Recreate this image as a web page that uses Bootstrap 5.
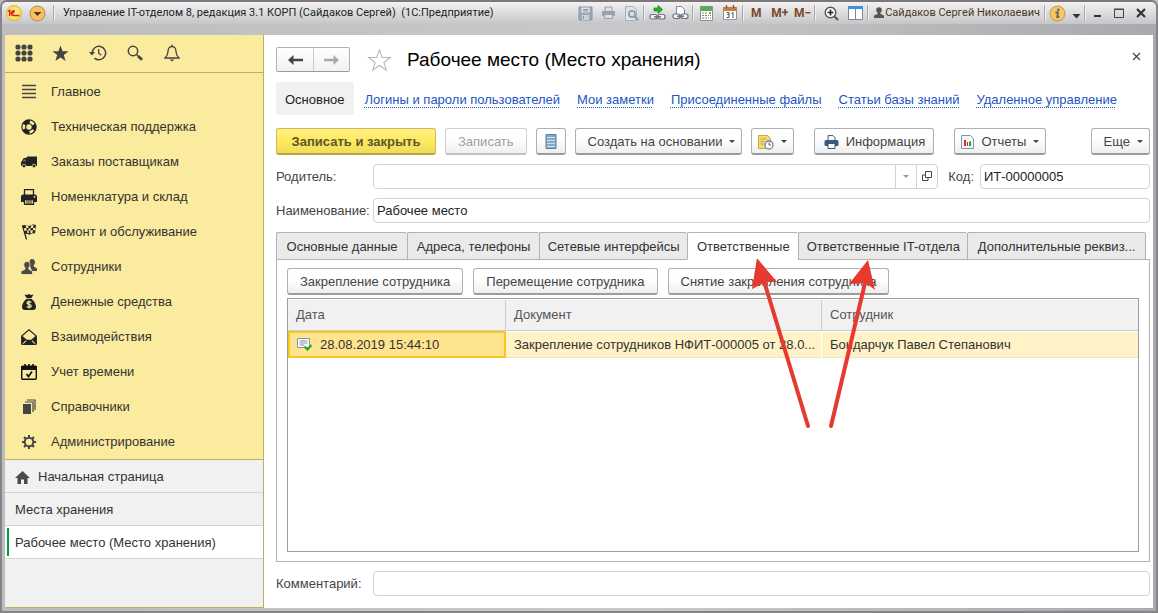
<!DOCTYPE html>
<html lang="ru">
<head>
<meta charset="utf-8">
<meta name="viewport" content="width=device-width, initial-scale=1">
<title>Рабочее место (Место хранения)</title>
<link href="https://cdn.jsdelivr.net/npm/bootstrap@5.3.0/dist/css/bootstrap.min.css" rel="stylesheet">
<style>
body{font:13px/16px "Liberation Sans",Arial,sans-serif;color:#333;background:#b9b9bb}
svg{display:block;flex:none}
button{font:inherit;color:inherit}
.win{min-height:100vh;border:2px solid #858587;border-top-color:#7d7779;border-radius:7px 7px 0 0;padding:0 3px 3px;background:linear-gradient(90deg,#bdbdbf,#c9c9cb 55%,#a9aaad)}
.titlebar{height:22px;margin:0 -3px;padding:0 4px 0 4px;font:11px/22px Roboto,"Open Sans",sans-serif;color:#222;background:linear-gradient(#f2f2f3,#d8d8da 60%,#c6c6c8);border-radius:5px 5px 0 0}
.titlebar button{border:0;padding:0;background:none;width:23px;height:22px;display:flex;align-items:center;justify-content:center;flex:none}
.titlebar .sys{width:22px}
.titlebar .wide{width:24px}
.titlebar .slim{width:16px}
.tsep{width:2px;height:16px;flex:none;border-left:1px solid #aaaaad;border-right:1px solid #eee}
.memo{font-weight:700;color:#7b4a28;font-size:12px}
.user-name{color:#4b3a18}
.under{height:11px}
.side{width:259px;flex:none;background:#f1f1f1;border-right:1px solid #bfae5c;border-bottom:1px solid #bfae5c}
.yellow{background:#fbeb9e;border-bottom:1px solid #bfae5c;padding-bottom:1px}
.quick{height:38px;border-bottom:1px solid #bfae5c;padding-left:8px}
.quick button{width:37px;height:36px;border:0;background:none;padding:0;display:flex;align-items:center;justify-content:center;color:#444}
.quick button:first-child{width:22px;margin-right:7px}
.menu-link{height:35px;padding:2px 0 0 16px;color:#333;text-decoration:none;gap:14px}
.open-link{height:33px;border-bottom:1px solid #d4d4d4;color:#333;text-decoration:none;padding:2px 0 0 10px}
.open-link.now{background:#fff;position:relative}
.open-link.now::before{content:"";position:absolute;left:2px;top:2px;bottom:2px;width:2px;background:#0a9648}
.form-area{background:#fff;padding:12px 3px 12px 12px;min-width:0}
.hist{height:25px;border:1px solid #b0b0b0;border-bottom-color:#999;border-radius:2px;background:linear-gradient(#fff,#f1f1f1)}
.hist button{width:36px;border:0;background:none;display:flex;align-items:center;justify-content:center}
.hist button+button{border-left:1px solid #ccc}
.ttl{font-size:19px;line-height:24px;color:#000;margin:1px 0 0 15px;font-weight:400}
.close-form{border:0;background:none;padding:0 9px 6px 0}
.pages{height:33px;gap:17px;margin-top:10px;white-space:nowrap}
.pages a{color:#2255c4;padding-top:2px;text-decoration:underline dotted;text-decoration-thickness:1px;text-underline-offset:3px}
.pages a.cur{background:#f1f1f1;border-radius:4px;line-height:31px;padding:2px 9px 0;margin-right:-6px;color:#222;text-decoration:none}
.bar{margin-top:13px;gap:9px}
.b{height:27px;border:1px solid #b0b0b0;border-bottom:2px solid #9c9c9c;border-radius:3px;background:linear-gradient(#fff 40%,#efefef);color:#444;padding:1px 12px 0;display:flex;align-items:center;justify-content:center;white-space:nowrap;gap:7px;font-size:13px;line-height:16px}
.b.main{width:160px;background:linear-gradient(#fff08a,#ffe95c 50%,#efdb5e);border-color:#d3bc48;border-bottom-color:#b9a43f;font-weight:700;color:#5c5630}
.b:disabled{color:#a0a0a0;border-color:#d0d0d0;border-bottom-color:#c2c2c2}
.b.tight{padding:1px 6px 0}
.b .dropd{margin-right:-6px}
.b.tight .dropd{margin-right:0}
.w-info{width:120px}
.w-rep{width:92px}
.apart{margin-left:11px}
.cmds{gap:10px}
.dropd{width:0;height:0;border:3px solid transparent;border-top-color:#444;border-bottom:0;flex:none}
.pale{opacity:.55}
.field{height:25px;border:1px solid #d2d2d2;border-radius:4px;padding:0 3px;color:#222;min-width:0;background:#fff;font-size:13px}
.code-field{width:170px}
.frow{margin-top:9px}
.lab{width:97px;flex:none;color:#444;white-space:nowrap}
.lab-code{margin:0 6px 0 10px;color:#444}
.combo{border:1px solid #d2d2d2;border-radius:4px;height:25px}
.combo .field{border:0;height:23px}
.combo button{width:21px;border:0;border-left:1px solid #d2d2d2;background:none;padding:0;display:flex;align-items:center;justify-content:center}
.tabrow{margin-top:9px;padding-right:4px}
.tabrow button{height:28px;border:1px solid #b2b2b2;border-right:0;background:#eaeaea;border-radius:2px 2px 0 0;padding:0;white-space:nowrap;line-height:25px;margin-bottom:-1px;flex:1 1 0}
.tabrow button:last-child{border-right:1px solid #b2b2b2}
.tabrow button.active{background:#fff;border-bottom-color:#fff;position:relative;z-index:1}
.pane{border:1px solid #b2b2b2;padding:8px 10px 9px;position:relative}
.gridbox{border:1px solid #9e9e9e;margin-top:3px;padding:1px 0 0}
.grid-t{width:100%;table-layout:fixed;border-collapse:separate;border-spacing:0}
.grid-t th{height:31px;background:#f1f1f1;font-weight:400;color:#555;border-bottom:1px solid #ccc;padding:0 8px 1px;border-right:1px solid #ccc}
.grid-t td{height:27px;padding:0 0 0 8px;background:#fff2c6;border-top:1px solid #fff;border-right:1px solid #fff;white-space:nowrap;box-shadow:inset 0 -1px #e8e4d6}
.grid-t td.sel{background:#ffe48f;border:2px solid #f8c721;padding:0 6px;box-shadow:none}
.grid-t th:last-child,.grid-t td:last-child{border-right:0}
.marks{position:absolute;left:469px;top:-1px;pointer-events:none;z-index:2}
</style>
</head>
<body>
<div class="win d-flex flex-column">
<header class="titlebar d-flex align-items-center">
 <svg width="16" height="16" viewBox="0 0 16 16"><defs><radialGradient id="gy"><stop offset="0" stop-color="#fff9b0"/><stop offset="1" stop-color="#f8dc3a"/></radialGradient></defs><circle cx="8" cy="8" r="7.500" fill="url(#gy)" stroke="#d9b94a"/><path d="M2 6.500l1.700-1.200v5.700M8.800 6a2.400 2.400 0 1 0-1.500 4.500h6.200M8.500 7.600a.9.900 0 1 0-.8 1.100" fill="none" stroke="#d8261c" stroke-width="1.400"/></svg>
 <button class="ms-1" aria-label="Меню"><svg width="17" height="17" viewBox="0 0 17 17"><circle cx="8.500" cy="8.500" r="7.500" fill="#f9bf62" stroke="#b88940"/><path d="M4.500 7h8l-4 4z" fill="#4d3a20"/></svg></button>
 <span class="tsep ms-1 me-2"></span>
 <span class="text-nowrap">Управление IT-отделом 8, редакция 3.1 КОРП (Сайдаков Сергей) &nbsp;(1С:Предприятие)</span>
 <div class="ms-auto d-flex align-items-center">
 <button aria-label="Сохранить"><svg width="15" height="15" viewBox="0 0 15 15"><path d="M1 1h13v13H1z" fill="#9fabb8" stroke="#8593a3"/><path d="M3.500 1.500h8v5h-8z" fill="#dde2e7"/><path d="M4 9h7v5H4z" fill="#c9d0d7"/><path d="M5 3.500h5M5 5h5M5.500 10v3" stroke="#8593a3"/></svg></button>
 <button aria-label="Печать"><svg width="15" height="14" viewBox="0 0 15 14"><path d="M4 5V1h7v4" fill="#dde0e3" stroke="#98a2ac"/><rect x="1" y="5" width="13" height="5" rx="1" fill="#98a2ac"/><path d="M3.500 8.500h8v4h-8z" fill="#dde0e3" stroke="#98a2ac"/></svg></button>
 <button aria-label="Просмотр"><svg width="15" height="15" viewBox="0 0 15 15"><path d="M1.500.5h8l3 3v11h-11z" fill="#e2e5e8" stroke="#a8b0b8"/><circle cx="8" cy="8" r="3.200" fill="#d1dce5" stroke="#8796a5" stroke-width="1.500"/><path d="M10.500 10.500l3.500 3.500" stroke="#8796a5" stroke-width="2"/></svg></button>
 <span class="tsep"></span>
 <button class="wide" aria-label="Получить ссылку"><svg width="17" height="16" viewBox="0 0 17 16"><g fill="#f5f5f5" stroke="#67717c" stroke-width="1.200"><rect x="1" y="9.500" width="7" height="4.500" rx="2"/><rect x="9" y="9.500" width="7" height="4.500" rx="2"/></g><path d="M5 11.800h7" stroke="#67717c" stroke-width="1.500"/><path d="M5 3h4V.5l4.500 4L9 8.500V6H5z" fill="#25b225" stroke="#13801c" stroke-width=".7"/></svg></button>
 <button aria-label="Перейти по ссылке"><svg width="17" height="16" viewBox="0 0 17 16"><path d="M4.500 9V1.500h5l3 3V9" fill="#fff" stroke="#7b8793"/><g fill="#f5f5f5" stroke="#67717c" stroke-width="1.200"><rect x="1" y="9" width="7" height="4.500" rx="2"/><rect x="9" y="9" width="7" height="4.500" rx="2"/></g><path d="M5 11.200h7" stroke="#67717c" stroke-width="1.500"/></svg></button>
 <span class="tsep"></span>
 <button class="wide" aria-label="Калькулятор"><svg width="13" height="15" viewBox="0 0 13 15"><path d="M.5.500h12v14H.5z" fill="#fff" stroke="#829682"/><path d="M1 1h11v4H1z" fill="#4fb04f"/><path d="M2 7h2M5 7h2M2 9.500h2M5 9.500h2M2 12h2M5 12h2M8 9.500h1M8 12h1M10 9.500h1M10 12h1" stroke="#6c8a6c" stroke-width="1.200"/><path d="M9 7h2" stroke="#d33" stroke-width="1.400"/></svg></button>
 <button class="wide" aria-label="Календарь"><svg width="14" height="16" viewBox="0 0 14 16"><path d="M.5 2.500h13v12H.5z" fill="#fff" stroke="#8d99a5"/><path d="M0 2h14v4H0z" fill="#c97c42"/><path d="M3.500 0v3M10.500 0v3" stroke="#8a5630" stroke-width="1.400"/><path d="M3.500 7.500h2.500v2H4.500h1.500v3H3.500M8.500 8.500l1.500-1v5.500" fill="none" stroke="#44505c"/></svg></button>
 <span class="tsep"></span>
 <button class="memo wide">M</button><button class="memo">M+</button><button class="memo">M−</button>
 <span class="tsep me-1"></span>
 <button aria-label="Масштаб"><svg width="15" height="15" viewBox="0 0 15 15"><circle cx="6.500" cy="6.500" r="5.300" fill="#fff" stroke="#555" stroke-width="1.400"/><path d="M3.500 6.500h6M6.500 3.500v6" stroke="#222" stroke-width="1.600"/><path d="M10.500 10.500l3.500 3.500" stroke="#555" stroke-width="2"/></svg></button>
 <button class="wide" aria-label="Панели"><svg width="15" height="14" viewBox="0 0 15 14"><path d="M.5.500h14v13H.5z" fill="#fff" stroke="#7c8794"/><path d="M0 0h15v3H0z" fill="#3d8fe0"/><path d="M7.500 3v11" stroke="#7c8794"/></svg></button>
 <span class="tsep"></span>
 <svg class="ms-1" width="12" height="12" viewBox="0 0 12 12" fill="#555"><circle cx="6" cy="3" r="2.800"/><path d="M4.500 5h3v2l3.500 1.500V11H1V8.500L4.500 7z"/></svg>
 <span class="user-name text-nowrap me-1">Сайдаков Сергей Николаевич</span>
 <span class="tsep"></span>
 <button class="sys" aria-label="О программе"><svg width="17" height="17" viewBox="0 0 17 17"><circle cx="8.500" cy="8.500" r="7.500" fill="#f7c666" stroke="#c79440"/><circle cx="9.300" cy="4.700" r="1.300" fill="#666"/><path d="M6.500 7.500h2.500l-.8 4.500h2" fill="none" stroke="#666" stroke-width="1.800"/></svg></button>
 <button class="slim" aria-label="Ещё"><svg width="9" height="11" viewBox="0 0 9 11"><path d="M.5 6h8L4.500 10.500z" fill="#333"/></svg></button>
 <span class="tsep"></span>
 <button class="sys" aria-label="Свернуть"><svg width="9" height="10"><path d="M1 8h7" stroke="#333" stroke-width="2"/></svg></button>
 <button class="sys" aria-label="Развернуть"><svg width="12" height="11"><path d="M1.500 1.500h9v8h-9z" fill="none" stroke="#444"/><path d="M1 1h10" stroke="#444"/></svg></button>
 <button class="sys" aria-label="Закрыть"><svg width="10" height="10"><path d="M1 1l8 8M9 1L1 9" stroke="#333" stroke-width="2.200"/></svg></button>
 </div>
</header>
<div class="under"></div>
<div class="d-flex flex-grow-1">
 <aside class="side">
 <div class="yellow">
 <div class="quick d-flex">
 <button aria-label="Разделы"><svg width="18" height="18" viewBox="0 0 18 18"><path d="M3 3h0M9 3h0M15 3h0M3 9h0M9 9h0M15 9h0M3 15h0M9 15h0M15 15h0" stroke="#444" stroke-width="5.200" stroke-linecap="round"/></svg></button>
 <button aria-label="Избранное"><svg width="17" height="17" viewBox="0 0 17 17"><path d="M8.500.5l2.100 5.800h6l-4.800 3.800 1.800 6-5.100-3.600-5.100 3.600 1.800-6L.4 6.300h6z" fill="#444"/></svg></button>
 <button aria-label="История"><svg width="18" height="16" viewBox="0 0 18 16"><path d="M3.200 8a6.700 6.700 0 1 1 2.300 5.100" fill="none" stroke="#444" stroke-width="1.500"/><path d="M0 7h6L3 10.500z" fill="#444"/><path d="M9.700 4v4.200l2.600 2" fill="none" stroke="#444" stroke-width="1.300"/></svg></button>
 <button aria-label="Поиск"><svg width="16" height="16" viewBox="0 0 16 16"><circle cx="6" cy="6" r="4.700" fill="none" stroke="#444" stroke-width="1.500"/><path d="M9.500 9.500l1.500 1.500" stroke="#444" stroke-width="1.500"/><path d="M11 11l4 3.700" stroke="#444" stroke-width="2.800"/></svg></button>
 <button aria-label="Уведомления"><svg width="16" height="18" viewBox="0 0 16 18"><path d="M8 2.500c-3 0-4 2.500-4 5 0 3-1 4.500-3 6.500h14c-2-2-3-3.500-3-6.500 0-2.500-1-5-4-5zM8 .5v2" fill="none" stroke="#444" stroke-width="1.300"/><path d="M5.500 15.500h5L8 17.500z" fill="#444"/></svg></button>
 </div>
 <nav>
 <a href="#" class="menu-link d-flex align-items-center"><svg width="16" height="16"><path d="M1 1.500h14M1 5.500h14M1 9.500h14M1 13.500h14" stroke="#444" stroke-width="1.600"/></svg>Главное</a>
 <a href="#" class="menu-link d-flex align-items-center"><svg width="16" height="16" viewBox="0 0 16 16"><circle cx="8" cy="8" r="5.200" fill="none" stroke="#222" stroke-width="5"/><circle cx="8" cy="8" r="5.200" fill="none" stroke="#fbeb9e" stroke-width="2.600" stroke-dasharray="4.500 6.390" stroke-dashoffset="-3"/></svg>Техническая поддержка</a>
 <a href="#" class="menu-link d-flex align-items-center"><svg width="16" height="16" viewBox="0 0 16 16"><path d="M6 2.500h10V12H0V8.500l2.500-4.300L6 3.500z" fill="#222"/><path d="M1.600 7.500L3 5.300H4.800v2.200z" fill="#6b6749"/><circle cx="3" cy="12" r="1.800" fill="#222" stroke="#fbeb9e" stroke-width=".7"/><circle cx="13" cy="12" r="1.800" fill="#222" stroke="#fbeb9e" stroke-width=".7"/></svg>Заказы поставщикам</a>
 <a href="#" class="menu-link d-flex align-items-center"><svg width="16" height="16" viewBox="0 0 16 16"><path d="M3.500 6V.7h9V6" fill="none" stroke="#222" stroke-width="1.300"/><path d="M1.500 5.500h13l1.500 1.500v6H0V7z" fill="#222"/><path d="M3.500 10.500h9v5h-9z" fill="#fbeb9e" stroke="#222" stroke-width="1.300"/><path d="M5 12h6M5 14h6" stroke="#222"/><circle cx="13.500" cy="7.800" r=".9" fill="#fbeb9e"/></svg>Номенклатура и склад</a>
 <a href="#" class="menu-link d-flex align-items-center"><svg width="16" height="16" viewBox="0 0 16 16"><path d="M1.500 1.500L5.500 15.500" stroke="#222" stroke-width="1.300"/><path d="M1.500 1.700C4-.5 7 3 9.500 1.500S13 .5 15 1l-1 8.500c-2-.5-3 0-4.500.8S6 9 4 10z" fill="#222"/><path d="M4.500 1.200l.7 2.500 2.300.5-.5-2.500zM10 1.500l-.3 2.800 2.500-.6.300-2.700zM2.800 4.500l2.400-.8.600 2.600-2.300.7zM7.500 4.300l2.200.1-.4 2.400-2-.3zM12.200 3.700l2.300.2-.3 2.500-2.300-.3zM5.800 6.400l1.500.1.800 2.800-1.600-.4zM9.300 6.800l2.600-.7-.4 2.600-2 .8z" fill="#fbeb9e"/></svg>Ремонт и обслуживание</a>
 <a href="#" class="menu-link d-flex align-items-center"><svg width="16" height="16" viewBox="0 0 16 16" fill="#4a4a4a"><path d="M11 0c2 0 3 1.500 3 3.200 0 1.400-.6 2.300-1.200 2.800v1.500L16 9.500V12h-5L8.500 6V3C8.500 1.200 9.500 0 11 0z"/><path d="M6 2.500c2 0 3 1.500 3 3.300 0 1.500-.6 2.400-1.200 3v1.400l3.700 2V15.500H0v-3.300l4-2V8.800C3.400 8.200 2.800 7.300 2.800 5.800 2.800 4 4 2.500 6 2.500z" stroke="#fbeb9e" stroke-width=".8"/></svg>Сотрудники</a>
 <a href="#" class="menu-link d-flex align-items-center"><svg width="16" height="16" viewBox="0 0 16 16"><path d="M3.500.5L6 1l2-1 2 1 2.500-.5-2.200 3.700h-4.600zM5.500 5h5c2.500 1.500 4.500 5 4.500 8 0 2-1 3-3 3H4c-2 0-3-1-3-3 0-3 2-6.500 4.500-8z" fill="#222"/><path d="M10.300 8.500C9.500 7.300 6 7.200 6 9c0 1.700 4.300 1 4.300 2.900 0 1.800-3.600 1.800-4.500.4M8 6.500v8" fill="none" stroke="#fbeb9e" stroke-width="1.200"/></svg>Денежные средства</a>
 <a href="#" class="menu-link d-flex align-items-center"><svg width="16" height="16" viewBox="0 0 16 16"><path d="M.7 7L8 .8 15.300 7v8.300H.7z" fill="none" stroke="#222" stroke-width="1.100"/><path d="M.5 7L5 11 .5 15.500zM15.500 7L11 11l4.500 4.500zM1.500 16L6 11.500h4l4.500 4.500z" fill="#222"/><path d="M.7 7.300l4.800 4h5l4.800-4" fill="none" stroke="#222" stroke-width="1.200"/></svg>Взаимодействия</a>
 <a href="#" class="menu-link d-flex align-items-center"><svg width="16" height="16" viewBox="0 0 16 16"><rect x=".7" y="2.200" width="14.600" height="13" rx="1" fill="none" stroke="#111" stroke-width="1.400"/><path d="M0 2h16v4H0z" fill="#111"/><path d="M4 0v3.500M8 0v3M12 0v3.500" stroke="#111" stroke-width="1.600"/><path d="M5.500 10l2 2.500 3.500-5" fill="none" stroke="#111" stroke-width="1.700"/></svg>Учет времени</a>
 <a href="#" class="menu-link d-flex align-items-center"><svg width="16" height="16" viewBox="0 0 16 16"><path d="M2 5h8v10H2z" fill="#444"/><path d="M4 3h8v10M6 1h8v10" fill="none" stroke="#444" stroke-width="1.200"/></svg>Справочники</a>
 <a href="#" class="menu-link d-flex align-items-center"><svg width="16" height="16" viewBox="0 0 16 16"><circle cx="8" cy="8" r="4.300" fill="none" stroke="#444" stroke-width="1.900"/><path d="M8 1v2.500M8 12.500V15M1 8h2.500M12.500 8H15M3 3l2 2M11 11l2 2M13 3l-2 2M5 11l-2 2" stroke="#444" stroke-width="2"/></svg>Администрирование</a>
 </nav>
 </div>
 <nav>
 <a href="#" class="open-link d-flex align-items-center gap-2"><svg width="15" height="13" viewBox="0 0 15 13"><path d="M7.500 0L15 7h-2.500v6H9V8.500H6V13H2.500V7H0z" fill="#4a4a4a"/></svg>Начальная страница</a>
 <a href="#" class="open-link d-flex align-items-center">Места хранения</a>
 <a href="#" class="open-link now d-flex align-items-center">Рабочее место (Место хранения)</a>
 </nav>
 </aside>
 <main class="form-area flex-grow-1 d-flex flex-column">
 <div class="d-flex align-items-center">
 <div class="hist d-flex"><button aria-label="Назад"><svg width="15" height="10" viewBox="0 0 15 10"><path d="M0 5l5.500-5v3.700H15v2.600H5.500V10z" fill="#444"/></svg></button><button aria-label="Вперед"><svg width="15" height="10" viewBox="0 0 15 10"><path d="M15 5L9.500 0v3.700H0v2.600h9.500V10z" fill="#aaa"/></svg></button></div>
 <svg class="ms-3" width="26" height="24" viewBox="0 0 26 24"><path d="M13.500 2l2.800 7.500h8l-6.400 5 2.400 7.700-6.800-4.700-6.800 4.700L9.100 14.500l-6.400-5h8z" fill="none" stroke="#b5b9be" stroke-width="1.100"/></svg>
 <h1 class="ttl">Рабочее место (Место хранения)</h1>
 <button class="close-form ms-auto" aria-label="Закрыть форму"><svg width="9" height="9"><path d="M1 1l7 7M8 1L1 8" stroke="#444" stroke-width="1.200"/></svg></button>
 </div>
 <nav class="pages d-flex align-items-center">
 <a href="#" class="cur">Основное</a><a href="#">Логины и пароли пользователей</a><a href="#">Мои заметки</a><a href="#">Присоединенные файлы</a><a href="#">Статьи базы знаний</a><a href="#">Удаленное управление</a>
 </nav>
 <div class="bar d-flex">
 <button class="b main">Записать и закрыть</button>
 <button class="b" disabled>Записать</button>
 <button class="b tight" aria-label="Список"><svg width="16" height="15" viewBox="0 0 16 15"><path d="M3 .5h10v14H3z" fill="#86aac5" stroke="#58809f"/><path d="M4 3.500h8M4 6.500h8M4 9.500h8M4 12.500h8" stroke="#d0e2ef"/></svg></button>
 <button class="b">Создать на основании<span class="dropd"></span></button>
 <button class="b tight" aria-label="Напоминания"><svg width="16" height="16" viewBox="0 0 16 16"><path d="M.5 1.500h9l3 3v10H.5z" fill="#f6d876" stroke="#cba83c"/><path d="M2.500 5h6M2.500 7.500h4M2.500 10h3" stroke="#c6a13a"/><circle cx="11" cy="11" r="4" fill="#fff" stroke="#6386ad" stroke-width="1.300"/><path d="M11 8.500V11h2" fill="none" stroke="#d33"/></svg><span class="dropd"></span></button>
 <button class="b tight apart w-info"><svg width="15" height="14" viewBox="0 0 15 14"><path d="M4 5V.6h5l2 2V5" fill="#fff" stroke="#355872"/><rect x=".5" y="5" width="14" height="6" rx="1.500" fill="#355c7c"/><path d="M4 8.500h7V13.500H4z" fill="#fff" stroke="#355872"/></svg><span>Информация</span></button>
 <button class="b tight apart w-rep"><svg width="13" height="14" viewBox="0 0 13 14"><path d="M.5.500h9l3 3v10H.5z" fill="#f4f7f9" stroke="#8196a7"/><path d="M4 5v6" stroke="#d22" stroke-width="2"/><path d="M6.500 7v4" stroke="#d22"/><path d="M9 6.500v4.500" stroke="#2a9d32" stroke-width="2"/></svg><span>Отчеты</span><span class="dropd"></span></button>
 <button class="b ms-auto">Еще<span class="dropd"></span></button>
 </div>
 <div class="frow d-flex align-items-center">
 <label class="lab" for="parent">Родитель:</label>
 <div class="combo d-flex flex-grow-1"><input id="parent" class="field flex-grow-1"><button aria-label="Выбрать"><span class="dropd pale"></span></button><button aria-label="Открыть"><svg width="11" height="11"><path d="M3.500.5h6v6h-6zM3 4H.500v5.500H6V7" fill="none" stroke="#444"/></svg></button></div>
 <label class="lab-code" for="code">Код:</label><input id="code" class="field code-field" value="ИТ-00000005">
 </div>
 <div class="frow d-flex align-items-center"><label class="lab" for="name">Наименование:</label><input id="name" class="field flex-grow-1" value="Рабочее место"></div>
 <div class="tabrow d-flex" role="tablist"><button role="tab" style="flex-grow:131">Основные данные</button><button role="tab" style="flex-grow:132">Адреса, телефоны</button><button role="tab" style="flex-grow:148">Сетевые интерфейсы</button><button role="tab" class="active" style="flex-grow:111">Ответственные</button><button role="tab" style="flex-grow:169">Ответственные IT-отдела</button><button role="tab" style="flex-grow:178">Дополнительные реквиз...</button></div>
 <section class="pane flex-grow-1 d-flex flex-column">
 <div class="cmds d-flex"><button class="b">Закрепление сотрудника</button><button class="b">Перемещение сотрудника</button><button class="b">Снятие закрепления сотрудника</button></div>
 <div class="gridbox flex-grow-1">
 <table class="grid-t"><colgroup><col style="width:218px"><col style="width:316px"><col></colgroup>
 <thead><tr><th>Дата</th><th>Документ</th><th>Сотрудник</th></tr></thead>
 <tbody><tr><td class="sel"><span class="d-flex align-items-center gap-2"><svg width="16" height="13" viewBox="0 0 16 13"><path d="M1.500.5h12v9h-12z" fill="#fff" stroke="#8193a4"/><path d="M3.500 3h8M3.500 5h8M3.500 7h5" stroke="#8193a4"/><path d="M8.500 8.500l3 3L15.500 7" fill="none" stroke="#24a72c" stroke-width="2.200"/></svg>28.08.2019 15:44:10</span></td><td>Закрепление сотрудников НФИТ-000005 от 28.0...</td><td>Бондарчук Павел Степанович</td></tr></tbody></table>
 </div>
 <svg class="marks" width="140" height="172" viewBox="746 259 140 172" fill="#e63a2e"><path d="M764 281L808 426M865 283L831 426" stroke="#e63a2e" stroke-width="4" stroke-linecap="round"/><path d="M757 258l20 24-11 0-14 7zM868 260l7 30-9-7-17 1z"/></svg>
 </section>
 <div class="frow d-flex align-items-center"><label class="lab" for="note">Комментарий:</label><input id="note" class="field flex-grow-1"></div>
 </main>
</div>
</div>
<script src="https://cdn.jsdelivr.net/npm/bootstrap@5.3.0/dist/js/bootstrap.bundle.min.js"></script>
</body>
</html>
